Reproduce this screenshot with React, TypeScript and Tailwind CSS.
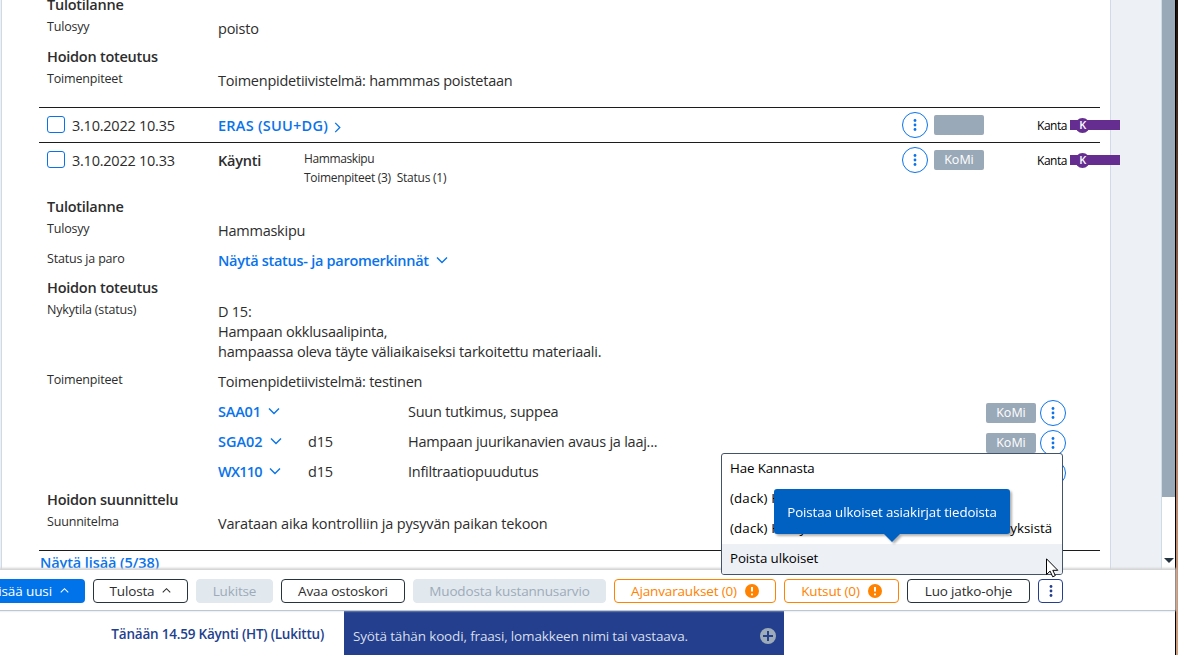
import type { ReactNode } from "react";
import clsx from "clsx";

const PROCEDURES = [
  { code: "SAA01", tooth: "", name: "Suun tutkimus, suppea", tracking: "tracking-[-0.2px]" },
  { code: "SGA02", tooth: "d15", name: "Hampaan juurikanavien avaus ja laaj...", tracking: "tracking-[0px]" },
  { code: "WX110", tooth: "d15", name: "Infiltraatiopuudutus", tracking: "tracking-[-0.75px]" },
];

export default function App() {
  return (
    <div className="relative flex h-[655px] w-[1178px] overflow-hidden bg-white font-['Open_Sans','Noto_Sans',sans-serif] text-[14.5px] leading-5 tracking-[-0.24px] text-[#2d2d2d]">
      <div className="flex w-[1175px] shrink-0 flex-col">
        <div className="flex h-[570px] overflow-hidden">
          <div className="w-0.5 shrink-0 border-r border-[#cfdae6] bg-[#edf1f6]" />
          <Records />
          <div className="w-[52px] shrink-0 border-x border-[#cfdbe7] bg-[#edf1f6]" />
          <Scrollbar />
        </div>
        <Toolbar />
        <EntryBar />
      </div>
      <div className="w-px bg-black" />
      <div className="w-0.5 bg-linear-to-b from-[#1a0f08] via-[#a8705a] to-[#cf9f80]" />
      <ActionMenu />
    </div>
  );
}

const Records = () => {
  return (
    <div className="relative z-[1] -mt-[5px] w-[1108px] shrink-0 pl-[37px]">
      <div className="w-[1061px]">
        <div className="pl-2">
          <Heading>Tulotilanne</Heading>
          <Row label="Tulosyy">poisto</Row>
          <Heading className="mt-0.5">Hoidon toteutus</Heading>
          <Row label="Toimenpiteet">Toimenpidetiivistelmä: hammmas poistetaan</Row>
        </div>

        <div className="mt-[10px] flex h-[35px] border-t border-[#1c1c1c] pl-2">
          <VisitDate>3.10.2022 10.35</VisitDate>
          <div className="flex h-9 w-[684px] shrink-0 items-center font-semibold tracking-[0.25px] text-[#0a73eb]">
            ERAS (SUU+DG)
            <Chevron className="mt-[3px] ml-1 size-[11px] -rotate-90" />
          </div>
          <VisitStatus />
        </div>
        <div className="flex h-[55px] border-t border-[#1c1c1c] pl-2">
          <VisitDate>3.10.2022 10.33</VisitDate>
          <div className="flex w-[684px] shrink-0 pt-2">
            <div className="w-[86px] font-semibold tracking-[-0.2px]">Käynti</div>
            <div className="-mt-0.5 text-[12px] leading-[19px] tracking-[-0.4px]">
              <p>Hammaskipu</p>
              <p>
                <span className="mr-1.5 tracking-[-0.3px]">Toimenpiteet (3)</span>
                <span className="tracking-[-0.25px]">Status (1)</span>
              </p>
            </div>
          </div>
          <VisitStatus tag="KoMi" />
        </div>

        <div className="pl-2">
          <Heading>Tulotilanne</Heading>
          <Row label="Tulosyy">Hammaskipu</Row>
          <Row label="Status ja paro">
            <ToggleLink className="tracking-[-0.28px]">Näytä status- ja paromerkinnät</ToggleLink>
          </Row>
          <Heading className="mt-px">Hoidon toteutus</Heading>
          <Row label="Nykytila (status)">
            <p>D 15:</p>
            <p>Hampaan okklusaalipinta,</p>
            <p className="tracking-[-0.21px]">hampaassa oleva täyte väliaikaiseksi tarkoitettu materiaali.</p>
          </Row>
          <Row label="Toimenpiteet">Toimenpidetiivistelmä: testinen</Row>
          <div className="-mt-px pl-[171px]">
            {PROCEDURES.map((item) => (
              <div key={item.code} className="flex h-[30px] items-center">
                <div className="w-[90px]">
                  <ToggleLink className={item.tracking}>{item.code}</ToggleLink>
                </div>
                <div className="w-[100px]">{item.tooth}</div>
                <div className="w-[578px]">{item.name}</div>
                <Tag className="mt-0.5 mr-1">KoMi</Tag>
                <MoreButton className="mt-0.5" />
              </div>
            ))}
          </div>
          <Heading className="mt-[3px]">Hoidon suunnittelu</Heading>
          <Row label="Suunnitelma">
            <span className="tracking-[-0.17px]">Varataan aika kontrolliin ja pysyvän paikan tekoon</span>
          </Row>
        </div>
        <div className="mt-[10px] border-t border-[#1c1c1c] pt-0.5 pl-px font-semibold tracking-[-0.1px] text-[#0a73eb]">
          Näytä lisää (5/38)
        </div>
      </div>
    </div>
  );
};

const Heading = ({ children, className }: { children: ReactNode; className?: string }) => (
  <h3 className={clsx("h-5 font-semibold tracking-[-0.25px]", className)}>{children}</h3>
);

const Row = ({ label, children }: { label: string; children: ReactNode }) => (
  <div className="flex pb-1.5">
    <div className="w-[171px] shrink-0 pt-0.5 text-[12.5px] tracking-[-0.18px]">{label}</div>
    <div className="pt-1">{children}</div>
  </div>
);

const VisitDate = ({ children }: { children: ReactNode }) => (
  <div className="flex w-[171px] shrink-0 pt-2">
    <span className="mr-[7px] h-[17px] w-[18px] rounded-[3px] border border-[#0a73eb]" />
    {children}
  </div>
);

const VisitStatus = ({ tag }: { tag?: string }) => (
  <div className="flex w-[218px] shrink-0 items-start pt-1">
    <MoreButton />
    <Tag className="mt-[3px] ml-1.5">{tag}</Tag>
    <div className="mt-[3px] ml-[53px] flex h-5 items-center text-[12px] tracking-[-0.45px] text-black">
      <span className="mt-0.5 w-[33px]">Kanta</span>
      <div className="flex h-[10px] w-[50px] shrink-0 items-center bg-[#662d91] pl-[5px]">
        <span className="flex size-[15px] items-center justify-center rounded-full bg-[#662d91] text-[11px] font-semibold text-white">
          K
        </span>
      </div>
    </div>
  </div>
);

const Tag = ({ children, className }: { children?: ReactNode; className?: string }) => (
  <span
    className={clsx(
      "flex h-5 w-[50px] shrink-0 items-center justify-center rounded-[2px] bg-[#9aa9b8] text-[12.5px] tracking-normal text-white",
      className,
    )}
  >
    {children}
  </span>
);

const MoreButton = ({ className }: { className?: string }) => (
  <button
    className={clsx(
      "flex size-[26px] shrink-0 items-center justify-center rounded-full border border-[#0a73eb] text-[#0a73eb]",
      className,
    )}
  >
    <Dots />
  </button>
);

const Dots = () => (
  <svg width="4" height="14" viewBox="0 0 4 14" fill="currentColor">
    <circle cx="2" cy="2.5" r="1.4" />
    <circle cx="2" cy="7" r="1.4" />
    <circle cx="2" cy="11.5" r="1.4" />
  </svg>
);

const Chevron = ({ className }: { className?: string }) => (
  <svg className={clsx("shrink-0", className)} width="12" height="12" viewBox="0 0 12 12" fill="none" stroke="currentColor" strokeWidth="1.4">
    <path d="M1 3.5 6 8.5 11 3.5" />
  </svg>
);

const ToggleLink = ({ children, className }: { children: ReactNode; className?: string }) => (
  <div className={clsx("flex items-center font-semibold text-[#0a73eb]", className)}>
    {children}
    <Chevron className="-mt-0.5 ml-[7px]" />
  </div>
);

const Scrollbar = () => (
  <div className="flex w-[13px] shrink-0 flex-col items-center">
    <div className="h-[497px] w-full shrink-0 bg-[#9aa9b8]" />
    <svg className="mt-[61px] ml-px" width="10" height="5" viewBox="0 0 10 5" fill="#263340">
      <path d="M0 0h10L5 5z" />
    </svg>
  </div>
);

const Toolbar = () => (
  <div className="z-10 flex h-[41px] items-center gap-2 border-b border-[#b9c7d6] bg-white pt-px shadow-[0_-1px_2px_1px_#d4d4d4]">
    <button className="-ml-4 flex h-6 w-[101px] shrink-0 items-center justify-end rounded bg-[#0073eb] pr-4 text-[13.5px] tracking-[-0.1px] whitespace-nowrap text-white">
      Lisää uusi
      <Chevron className="ml-2 size-[9px] rotate-180" />
    </button>
    <ToolButton className="w-[95px] border-[#263340]">
      Tulosta
      <Chevron className="ml-2 size-[9px] rotate-180" />
    </ToolButton>
    <ToolButton className="w-[77px] border-[#e1e8ee] bg-[#e1e8ee] text-[#9dabb9]">Lukitse</ToolButton>
    <ToolButton className="w-[124px] border-[#263340]">Avaa ostoskori</ToolButton>
    <ToolButton className="w-[193px] border-[#e1e8ee] bg-[#e1e8ee] text-[#9dabb9]">
      Muodosta kustannusarvio
    </ToolButton>
    <ToolButton className="w-[162px] border-[#ff8200] text-[#ff8200]">
      Ajanvaraukset (0)
      <Alert />
    </ToolButton>
    <ToolButton className="w-[115px] border-[#ff8200] text-[#ff8200]">
      Kutsut (0)
      <Alert />
    </ToolButton>
    <ToolButton className="w-[123px] border-[#263340]">Luo jatko-ohje</ToolButton>
    <ToolButton className="w-[25px] border-[#233f8e] text-[#233f8e]">
      <Dots />
    </ToolButton>
  </div>
);

const ToolButton = ({ children, className }: { children: ReactNode; className?: string }) => (
  <button
    className={clsx(
      "flex h-6 shrink-0 items-center justify-center rounded border text-[13.5px] tracking-[-0.15px] whitespace-nowrap",
      className,
    )}
  >
    {children}
  </button>
);

const Alert = () => (
  <svg className="ml-2" width="14" height="14" viewBox="0 0 14 14">
    <circle cx="7" cy="7" r="7" fill="#ff8200" />
    <path d="M7 3v4.5M7 9.5v1.7" stroke="white" strokeWidth="2" />
  </svg>
);

const EntryBar = () => (
  <div className="flex h-11">
    <p className="w-[344px] pt-[13px] pr-5 text-right text-[13.5px] font-semibold tracking-[-0.21px] text-[#233f8e]">
      Tänään 14.59 Käynti (HT) (Lukittu)
    </p>
    <div className="flex w-[440px] items-center justify-between bg-[#233f8e] pt-1.5 pr-2 pl-[9px] text-[13.5px] tracking-[-0.15px] text-[#d7deea]">
      Syötä tähän koodi, fraasi, lomakkeen nimi tai vastaava.
      <svg width="16" height="16" viewBox="0 0 16 16">
        <circle cx="8" cy="8" r="8" fill="#9dabb9" />
        <path d="M8 3v10M3 8h10" stroke="#233f8e" strokeWidth="2" />
      </svg>
    </div>
  </div>
);

const ActionMenu = () => (
  <div className="absolute top-[453px] left-[721px] z-20 w-[342px] rounded-[3px] border border-[#43546a] bg-white text-[13.3px] tracking-[-0.1px] text-black">
    <ul>
      <li className="h-[30px] px-2 leading-[28px]">Hae Kannasta</li>
      <li className="h-[30px] px-2 leading-[28px] tracking-[0.15px]">(dack) Hae Kannasta</li>
      <li className="h-[30px] px-2 leading-[28px] tracking-[0.02px] whitespace-nowrap">
        <span className="tracking-[0.15px]">(dack) </span>Hae yhteenveto asiakkaan lääkemääräyksistä
      </li>
      <li className="h-[30px] rounded-b-[2px] bg-[#edf1f6] px-2 leading-[28px]">Poista ulkoiset</li>
    </ul>
    <div className="absolute top-[35px] left-[52px] flex h-[45px] w-[236px] items-center justify-center rounded-[3px] bg-[#0061c2] text-white drop-shadow-[2px_2px_1px_#0000004d]">
      Poistaa ulkoiset asiakirjat tiedoista
      <div className="absolute top-full left-[110px] border-x-8 border-t-8 border-x-transparent border-t-[#0061c2]" />
    </div>
    <svg className="absolute top-[104px] left-[324px]" width="13" height="20" viewBox="0 0 13 20">
      <path d="M.5.8v15.7l3.6-3.4 2.6 5.7 2.6-1.2-2.5-5.3h5z" fill="white" stroke="black" />
    </svg>
  </div>
);
